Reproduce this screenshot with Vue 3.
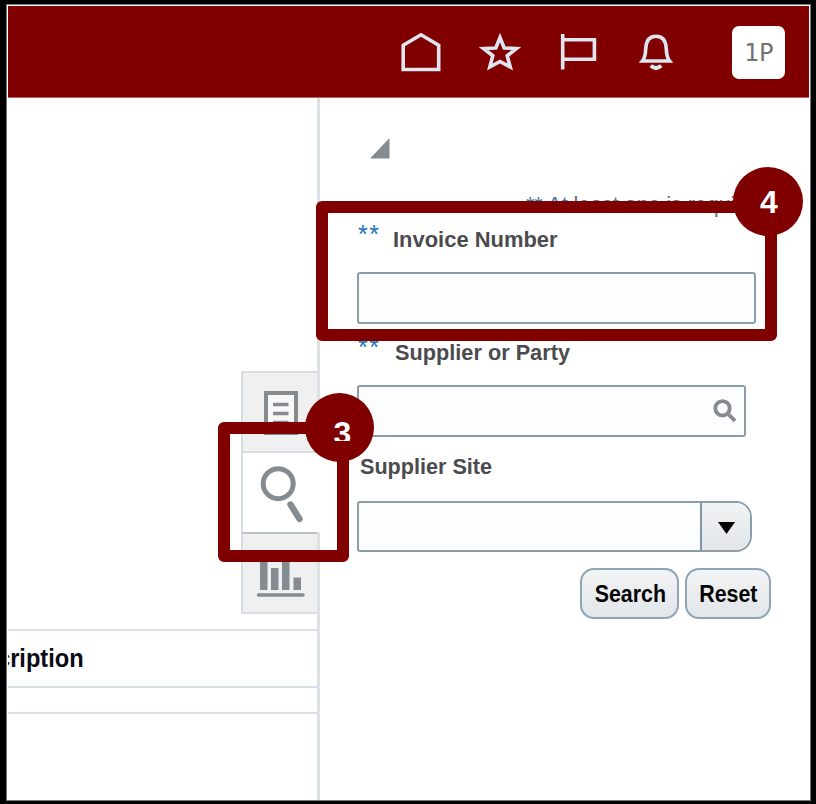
<script setup>
import { ref } from 'vue'

const invoiceNumber = ref('')
const supplier = ref('')
const site = ref('')
</script>

<template>
  <div class="stage">
    <div class="frame">
      <header class="topbar">
        <svg class="home" width="40" height="40" viewBox="0 0 40 40">
          <path d="M2.2 37.5V13.2L20 2.8L37.7 13.2V37.5Z" />
        </svg>
        <svg class="star" width="42" height="40" viewBox="0 0 42 40">
          <path d="M21 5.500L25.200 16L37.500 16.500L28.200 23.800L31.200 35L21 29.500L10.800 35L13.800 23.800L4.500 16.500L16.800 16Z" />
        </svg>
        <svg class="flag" width="38" height="40" viewBox="0 0 38 40">
          <path d="M2.7 2V37.5M2.7 7.7H34.4V27.3H2.7" />
        </svg>
        <svg class="bell" width="34" height="40" viewBox="0 0 34 40">
          <path d="M3.500 29C6.500 25.500 6.400 21 6.800 16C7.300 8 11 4.200 17 4.200S26.700 8 27.200 16C27.600 21 27.500 25.500 30.500 29Z" />
          <path class="clapper" d="M11.800 33.600Q17 38.500 22.200 33.600" />
        </svg>
        <div class="avatar">1P</div>
      </header>

      <main class="body">
        <section class="results">
          <nav class="tabs">
            <button class="tab first" aria-label="Details">
              <svg width="36" height="46" viewBox="0 0 36 46">
                <rect x="3" y="3" width="30" height="40" fill="#f8f8f8" stroke="#858c91" stroke-width="4" />
                <path d="M10 14.500H25.500M10 23.500H25.500M10 32.500H25.500" stroke="#858c91" stroke-width="3.500" />
              </svg>
            </button>
            <button class="tab active" aria-label="Find">
              <svg width="46" height="60" viewBox="0 0 46 60">
                <circle cx="20.200" cy="19.700" r="15" fill="none" stroke="#858c91" stroke-width="5" />
                <path d="M32.500 40.500L41.500 55" stroke="#858c91" stroke-width="6.400" stroke-linecap="round" />
              </svg>
            </button>
            <button class="tab last" aria-label="Reports">
              <svg width="50" height="50" viewBox="0 0 50 50">
                <path d="M4 6H11.500V42H4ZM15 20H22.500V42H15ZM26 6H33.500V42H26ZM37.500 29.500H45V42H37.500Z" fill="#858c91" />
                <path d="M2.500 47H47" stroke="#858c91" stroke-width="3.400" stroke-linecap="round" />
              </svg>
            </button>
          </nav>
          <div class="grid-head"><span>cription</span></div>
          <div class="grid-row"></div>
        </section>

        <aside class="panel">
          <svg class="collapse" width="20" height="21" viewBox="0 0 20 21">
            <path d="M0 20.500H19.500V0Z" />
          </svg>
          <p class="hint"><span>** At</span> least one is required</p>
          <label class="label invoice"><i>**</i><span>Invoice Number</span></label>
          <div class="field wide"><input v-model="invoiceNumber" aria-label="Invoice Number" /></div>
          <label class="label party"><i>**</i><span>Supplier or Party</span></label>
          <div class="field lookup">
            <input v-model="supplier" aria-label="Supplier or Party" />
            <svg width="26" height="26" viewBox="0 0 26 26">
              <circle cx="10.500" cy="10.300" r="7.200" />
              <path d="M15.800 15.600L23 22.800" />
            </svg>
          </div>
          <label class="label site"><span>Supplier Site</span></label>
          <div class="field select">
            <input v-model="site" aria-label="Supplier Site" />
            <button class="drop" aria-label="Open list">
              <svg width="17" height="12" viewBox="0 0 17 12"><path d="M0 0H17L8.500 12Z" /></svg>
            </button>
          </div>
          <div class="actions">
            <button class="btn search"><span>Search</span></button>
            <button class="btn reset"><span>Reset</span></button>
          </div>
        </aside>
      </main>
    </div>

    <div class="callout box-three"></div>
    <div class="callout box-four"></div>
    <div class="badge badge-three"><span>3</span></div>
    <div class="badge badge-four"><span>4</span></div>
  </div>
</template>

<style>
body { background: #000; overflow: hidden; }
</style>

<style scoped>
* { box-sizing: border-box; }
button, input { margin: 0; padding: 0; border: 0; outline: 0; background: none; font: inherit; }
svg { display: block; flex: none; }
.stage {
  position: relative;
  width: 816px;
  height: 804px;
  padding: 4px 5px 3px 6px;
  background: #000;
  font-family: "Liberation Sans", Arial, sans-serif;
}
.frame {
  display: flex;
  flex-direction: column;
  width: 805px;
  height: 797px;
  border: 1px solid #777;
  background: #fff;
}
.topbar {
  display: flex;
  flex: none;
  height: 92px;
  margin: 1px 1px 0;
  padding: 20px 24px 0 393px;
  background: #800000;
  border-bottom: 1px solid #b96565;
}
.topbar svg { margin-top: 6px; fill: none; stroke: #dfe6f2; stroke-width: 3.600; }
.star { margin-left: 38px; }
.flag { margin-left: 39px; }
.bell { margin-left: 41px; }
.topbar .clapper { stroke-width: 4; }
.avatar {
  width: 53px;
  height: 53px;
  margin-left: auto;
  border-radius: 7px;
  background: #fff;
  color: #737373;
  font: 24px/54px "DejaVu Sans", sans-serif;
  letter-spacing: -0.500px;
  text-align: center;
}
.body { display: flex; flex: 1; min-height: 0; }
.results {
  display: flex;
  flex-direction: column;
  flex: none;
  width: 313px;
  padding: 273px 0 0 1px;
  border-right: 3px solid #dde1e5;
}
.tabs { display: flex; flex-direction: column; flex: none; width: 76px; height: 243px; margin: 0 0 0 auto; }
.tab { display: flex; justify-content: flex-start; width: 76px; border-left: 2px solid #d7dde2; }
.tab.first { height: 82px; padding: 17px 0 0 20px; background: #f0f0f0; border-top: 2px solid #d7dde2; border-bottom: 2px solid #d7dde2; }
.tab.active { width: 79px; height: 79px; padding: 11px 0 0 15px; background: #fff; }
.tab.last { height: 82px; padding: 14px 0 0 13px; background: #f0f0f0; border-top: 2px solid #bac2c9; border-bottom: 2px solid #d7dde2; }
.grid-head {
  flex: none;
  height: 59px;
  margin-top: 15px;
  border-top: 2px solid #d6e0e8;
  border-bottom: 2px solid #d6e0e8;
  overflow: hidden;
}
.grid-head span {
  display: block;
  width: 120px;
  margin-left: -11px;
  font-size: 25px;
  line-height: 55px;
  font-weight: bold;
  color: #0b0b14;
  transform: scaleX(0.945);
  transform-origin: left;
}
.grid-row { flex: none; height: 26px; border-bottom: 2px solid #d6e0e8; }
.panel { display: flex; flex-direction: column; flex: 1; padding: 40px 0 0 37px; }
.collapse { margin-left: 13px; fill: #858c91; }
.hint { margin: 33px 0 0 169px; height: 26px; color: #5b7485; font-size: 21.400px; line-height: 26px; white-space: nowrap; }
.hint span { color: #3579ad; }
.label { display: flex; flex: none; color: #4b4b4f; font-size: 22.500px; font-weight: bold; line-height: 26px; white-space: nowrap; }
.label i { width: 36px; height: 26px; margin-top: -6px; padding-left: 1px; color: #2272b5; font-style: normal; font-weight: normal; font-size: 25px; letter-spacing: 1.400px; }
.label span { transform: scaleX(0.975); transform-origin: left; }
.invoice { height: 26px; margin-top: 9px; }
.party { height: 26px; margin-top: 16px; }
.party i { width: 38px; }
.party span { transform: scaleX(0.965); }
.site { margin-top: 17px; padding-left: 3px; }
.site span { transform: scaleX(0.960); }
.field { display: flex; flex: none; height: 52px; border: 2px solid #8b9da9; border-radius: 3px; background: #fcfdff; }
.field input { flex: 1; min-width: 0; }
.wide { width: 399px; margin-top: 19px; }
.lookup { width: 389px; margin-top: 19px; padding: 11px 6px 0 0; }
.lookup svg { fill: none; stroke: #868b8f; stroke-width: 3.800; }
.select { width: 395px; height: 51px; margin-top: 21px; border-radius: 3px 16px 16px 3px; }
.drop {
  display: flex;
  justify-content: center;
  width: 50px;
  padding-top: 19px;
  border-left: 2px solid #7e96a8;
  border-radius: 0 14px 14px 0;
  background: linear-gradient(#f1f3f4, #e2e6e9);
}
.drop svg { fill: #000; }
.actions { display: flex; gap: 6px; margin: 16px 0 0 223px; }
.btn {
  height: 51px;
  border: 2px solid #8fa5b5;
  border-radius: 14px;
  background: linear-gradient(#f2f3f4, #e2e6e9);
  color: #050505;
  font-size: 23px;
  line-height: 48px;
  font-weight: bold;
}
.btn span { display: inline-block; margin: 0 -10px; transform: scaleX(0.930); }
.search { width: 99px; padding-left: 2px; }
.reset { width: 86px; }
.callout { position: absolute; border: 12px solid #800000; border-radius: 6px; }
.box-three { left: 218px; top: 422px; width: 131px; height: 140px; }
.box-four { left: 316px; top: 201px; width: 461px; height: 140px; }
.badge {
  position: absolute;
  display: flex;
  justify-content: center;
  border-radius: 50%;
  background: #800000;
  color: #fff;
  font: bold 32px/40px "Liberation Sans", Arial, sans-serif;
}
.badge span { height: 40px; overflow: hidden; }
.badge-three { left: 305px; top: 393px; width: 69px; height: 69px; padding: 20px 0 0 6px; }
.badge-three span { height: 28px; }
.badge-four { left: 733px; top: 167px; width: 70px; height: 69px; padding: 15px 0 0 2px; }
</style>
